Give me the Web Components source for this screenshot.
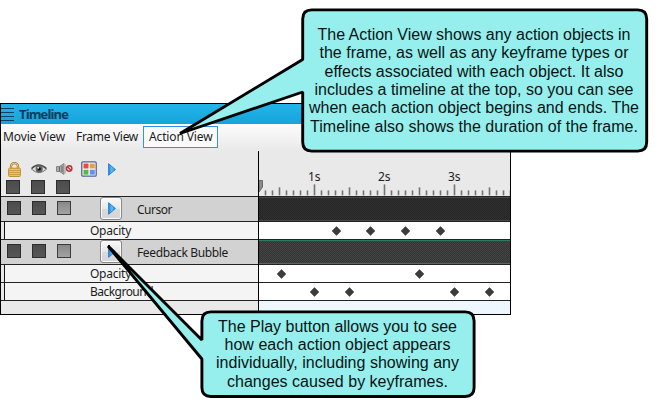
<!DOCTYPE html>
<html lang="en">
<head>
<meta charset="utf-8">
<title>Timeline</title>
<style>
html,body{margin:0;background:#fff;width:657px;height:407px;overflow:hidden}
body{position:relative;font:12px/16px "Noto Sans","Open Sans",sans-serif;color:#1c1c1c}
</style>
</head>
<body>
<timeline-panel></timeline-panel>
<call-out bx="302.7" by="9.9" bw="344" bh="141.2" tail="303,59.5 180,133.5 303,92" top="31.8" pitch="18.4" mid="474">
<fit-text w="313">The Action View shows any action objects in</fit-text>
<fit-text w="309">the frame, as well as any keyframe types or</fit-text>
<fit-text w="299">effects associated with each object. It also</fit-text>
<fit-text w="319">includes a timeline at the top, so you can see</fit-text>
<fit-text w="330">when each action object begins and ends. The</fit-text>
<fit-text w="328">Timeline also shows the duration of the frame.</fit-text>
</call-out>
<call-out bx="201.9" by="311.9" bw="272.2" bh="84.6" tail="202,340 108,246 202,359" top="323.8" pitch="18.3" mid="337.5">
<fit-text w="239">The Play button allows you to see</fit-text>
<fit-text w="226">how each action object appears</fit-text>
<fit-text w="243">individually, including showing any</fit-text>
<fit-text w="221">changes caused by keyframes.</fit-text>
</call-out>
<script>
const shadow=(el,html)=>{const r=el.attachShadow({mode:'open'});r.innerHTML=html;return r};

customElements.define('call-out',class extends HTMLElement{
  connectedCallback(){
    const a=n=>this.getAttribute(n),x=+a('bx'),y=+a('by'),w=+a('bw'),h=+a('bh'),r=9;
    const [p,q,t]=a('tail').split(' ');
    const d=`M${x+r},${y}H${x+w-r}Q${x+w},${y} ${x+w},${y+r}V${y+h-r}Q${x+w},${y+h} ${x+w-r},${y+h}H${x+r}Q${x},${y+h} ${x},${y+h-r}V${t.split(',')[1]}L${q}L${x},${p.split(',')[1]}V${y+r}Q${x},${y} ${x+r},${y}Z`;
    shadow(this,`<style>:host{position:absolute;inset:0;pointer-events:none;color:#061414}
      svg{position:absolute;inset:0}
      .copy{position:absolute;left:${+a('mid')-200}px;top:${+a('top')-6}px;width:400px;display:flex;flex-direction:column;align-items:center;font:16px/${a('pitch')}px "Liberation Sans",Arial,sans-serif}
      </style><svg width="657" height="407"><path d="${d}" fill="#96efed" stroke="#000" stroke-width="2.9" stroke-linejoin="bevel"/></svg>
      <div class="copy"><slot></slot></div>`);
  }
});

const play=`<svg width="8" height="13" viewBox="0 0 8 13"><defs><linearGradient id="p"><stop stop-color="#2584d8"/><stop offset=".5" stop-color="#62bdf3"/><stop offset="1" stop-color="#247acb"/></linearGradient></defs><path d="M.6.7 7.4 6.5.6 12.3Z" fill="url(#p)" stroke="#2583d5"/></svg>`;
customElements.define('play-icon',class extends HTMLElement{
  connectedCallback(){shadow(this,`<style>:host{display:block;width:8px;height:13px}svg{display:block}</style>${play}`)}
});

customElements.define('state-boxes',class extends HTMLElement{
  connectedCallback(){shadow(this,`<style>:host{display:flex;gap:11px}
    i{box-sizing:border-box;width:14px;height:14px;border:1px solid #2d2d2d;background:linear-gradient(#4c4c4c,#565656)}
    :host([muted]) i:last-child{background:linear-gradient(#888,#a3a3a3);border-color:#3c3c3c}</style><i></i><i></i><i></i>`)}
});

customElements.define('key-track',class extends HTMLElement{
  connectedCallback(){
    const k=(this.getAttribute('keys')||'').split(' ').filter(Boolean);
    shadow(this,`<style>:host{display:block;flex:1;background:#fff}svg{display:block}</style><svg width="251" height="17">${k.map(x=>`<path d="M${x-259} 4.6l4.4 4.4-4.4 4.4-4.4-4.4z" fill="#3c3c3c" stroke="#3c3c3c" stroke-width=".6" stroke-linejoin="round"/>`).join('')}</svg>`);
  }
});

customElements.define('object-row',class extends HTMLElement{
  connectedCallback(){
    const g=this.hasAttribute('active');
    shadow(this,`<style>:host{display:flex;height:24px;border-bottom:1px solid #222}
    .l{box-sizing:border-box;width:257px;background:#d2d2d2;display:flex;padding-left:6px}
    state-boxes{margin-top:4px}
    .b{box-sizing:border-box;width:22px;height:23px;margin-left:29px;border:1px solid #878787;border-radius:3px;background:linear-gradient(#f8f8f8,#e8e8e8 50%,#d9d9d9 52%,#d6d6d6);box-shadow:inset 0 0 0 1px #fafafa;display:flex;align-items:center;justify-content:center}
    .b play-icon{margin:-1px 0 0 1px}
    .n{margin:5px 0 0 15px}
    .bar{box-sizing:border-box;flex:1;margin-left:1px;background:repeating-conic-gradient(${g?'#343434 0 25%,#444 0 50%':'#262626 0 25%,#303030 0 50%'}) 0 0/2px 2px;border:solid ${g?'#2c7d60':'#484848'};border-width:1px 0}
    </style><div class="l"><state-boxes muted></state-boxes><div class="b"><play-icon></play-icon></div><div class="n"><slot></slot></div></div><div class="bar"></div>`);
  }
});

customElements.define('effect-row',class extends HTMLElement{
  connectedCallback(){shadow(this,`<style>:host{display:flex;height:17px;border-bottom:1px solid #222}
    .l{box-sizing:border-box;width:257px;margin-right:1px;display:flex;background:linear-gradient(90deg,#e8e8e8 3px,#111 3px 4px,#f4f4f4 4px);padding-left:89px;line-height:18px}
    </style><div class="l"><slot></slot></div><key-track keys="${this.getAttribute('keys')}"></key-track>`)}
});

customElements.define('time-ruler',class extends HTMLElement{
  connectedCallback(){
    let t='';
    for(let k=0;k<36;k++){const h=k%10==7?11:k%5==2?8:5;t+=`<path d="M${6.5+7*k} 44.4v-${h}" stroke="#747474" stroke-width="1.6"/>`}
    shadow(this,`<style>:host{display:block;flex:1;height:45px;margin-left:1px}svg{display:block}text{font-size:12px;fill:#222}</style>
    <svg width="251" height="45">${t}<path d="M0 29.5h3.5V36L0 41z" fill="#8c8c8c" stroke="#6a6a6a"/>
    <text x="49" y="29.5">1s</text><text x="119" y="29.5">2s</text><text x="189" y="29.5">3s</text></svg>`);
  }
});

customElements.define('tool-icons',class extends HTMLElement{
  connectedCallback(){shadow(this,`<style>:host{display:flex;height:18px;align-items:center}svg{display:block;flex:none}play-icon{margin-left:11px}</style>
  <svg width="13" height="15" viewBox="0 0 13 15"><path d="M3 7V4.6a3.5 3.5 0 0 1 7 0V7" fill="none" stroke="#a77b26" stroke-width="2.4"/><path d="M3 7V4.6a3.5 3.5 0 0 1 7 0V7" fill="none" stroke="#efd078" stroke-width="1"/><rect x=".6" y="6.2" width="11.8" height="8.3" rx="1" fill="#edc260" stroke="#bd8f3c"/><path d="M1.2 8.5h10.6M1.2 10.5h10.6M1.2 12.5h10.6" stroke="#cf9d42"/></svg>
  <svg style="margin-left:10px" width="16" height="12" viewBox="0 0 16 12"><path d="M.5 6.2Q7.5-1.5 15.5 6.2Q8 13 .5 6.2Z" fill="#ddd" stroke="#777"/><path d="M.5 5.5Q7.5-1.5 15.5 5.5" fill="none" stroke="#4c4c4c" stroke-width="1.3"/><circle cx="8.2" cy="5.9" r="3.6" fill="#666"/><circle cx="8.2" cy="5.9" r="1.7" fill="#111"/><circle cx="7.2" cy="4.7" r="1" fill="#ddd"/></svg>
  <svg style="margin-left:9px" width="17" height="12" viewBox="0 0 17 12"><path d="M.5 3.5h3L8 .6v10.8L3.5 8.5h-3z" fill="#aaa" stroke="#858585"/><path d="M3.5 3.5v5M6 3v6" stroke="#666"/><path d="M9.5 1.5v9" stroke="#bbb"/><circle cx="13.2" cy="5.5" r="2.7" fill="#f3dede" stroke="#b4323c" stroke-width="1.4"/><path d="M11.4 3.7 15 7.3" stroke="#b4323c" stroke-width="1.3"/></svg>
  <svg style="margin-left:8px" width="16" height="16" viewBox="0 0 16 16"><rect x=".8" y=".8" width="14.4" height="14.4" rx="1.2" fill="#fff" stroke="#51608d" stroke-width="1.3"/><rect x="2.5" y="2.5" width="5" height="5" fill="#f0483c"/><rect x="8.8" y="2.5" width="5" height="5" fill="#e8a045"/><rect x="2.5" y="8.7" width="5" height="5" fill="#54b84d"/><rect x="8.8" y="8.7" width="5" height="5" fill="#638fee"/></svg>
  <play-icon></play-icon>`)}
});

customElements.define('timeline-panel',class extends HTMLElement{
  connectedCallback(){shadow(this,`<style>
    :host{box-sizing:border-box;display:block;width:511px;height:212px;margin-top:103px;border:1px solid #000;position:relative;background:#e9e9e9;overflow:hidden}
    header{height:20px;display:flex;background:linear-gradient(#22b4e9,#16a4d9);align-items:center;color:#07395c;font:bold 13px/20px "Open Sans","Noto Sans",sans-serif}
    .grip{width:13px;height:14px;background:repeating-linear-gradient(#0a4264 0 1px,transparent 1px 4px);margin-right:5px;margin-top:1px}
    nav{height:27px;display:flex;background:linear-gradient(#fcfcfc,#e9e9e9);padding:2px 0 0 2px;box-sizing:border-box}
    nav fit-text{line-height:21px}
    .on{margin-left:5px;box-sizing:border-box;height:22px;width:75px;border:1px solid #3390f0;background:#fafafa;padding-left:5px;line-height:20px}
    .on fit-text{line-height:20px}
    .top{height:45px;display:flex;border-bottom:1px solid #222}
    .tools{width:257px;padding:9px 0 0 5px;box-sizing:border-box}
    .tools tool-icons{margin-left:2px}
    .tools state-boxes{margin-top:2px}
    .end{height:13px;display:flex}.end i{flex:1;margin-left:258px;background:#eef6ff}
    .div{position:absolute;left:257px;top:47px;bottom:0;width:1px;background:#000}
    </style>
    <header><div class="grip"></div><fit-text w="49">Timeline</fit-text></header>
    <nav><fit-text w="62">Movie View</fit-text><fit-text w="62" style="margin-left:11px">Frame View</fit-text><div class="on"><fit-text w="63.5">Action View</fit-text></div></nav>
    <div class="top"><div class="tools"><tool-icons></tool-icons><state-boxes></state-boxes></div><time-ruler></time-ruler></div>
    <object-row><fit-text w="35">Cursor</fit-text></object-row>
    <effect-row keys="336.5 370.5 405.5 440.5"><fit-text w="41">Opacity</fit-text></effect-row>
    <object-row active><fit-text w="91">Feedback Bubble</fit-text></object-row>
    <effect-row keys="281.5 419.5"><fit-text w="41">Opacity</fit-text></effect-row>
    <effect-row keys="314.5 349.5 454.5 489.5"><fit-text w="63">Background</fit-text></effect-row>
    <div class="end"><i></i></div><div class="div"></div>`)}
});

// Text spread evenly to a given width. Defined last, so that the fonts its
// containers set are in place when it measures itself.
customElements.define('fit-text',class extends HTMLElement{
  connectedCallback(){
    const r=shadow(this,`<style>:host{display:block;white-space:nowrap}span{display:inline-block}</style><span><slot></slot></span>`);
    const s=r.querySelector('span'),w=+this.getAttribute('w');
    s.style.letterSpacing=(w-s.getBoundingClientRect().width)/this.textContent.length+'px';
  }
});
</script>
</body>
</html>
